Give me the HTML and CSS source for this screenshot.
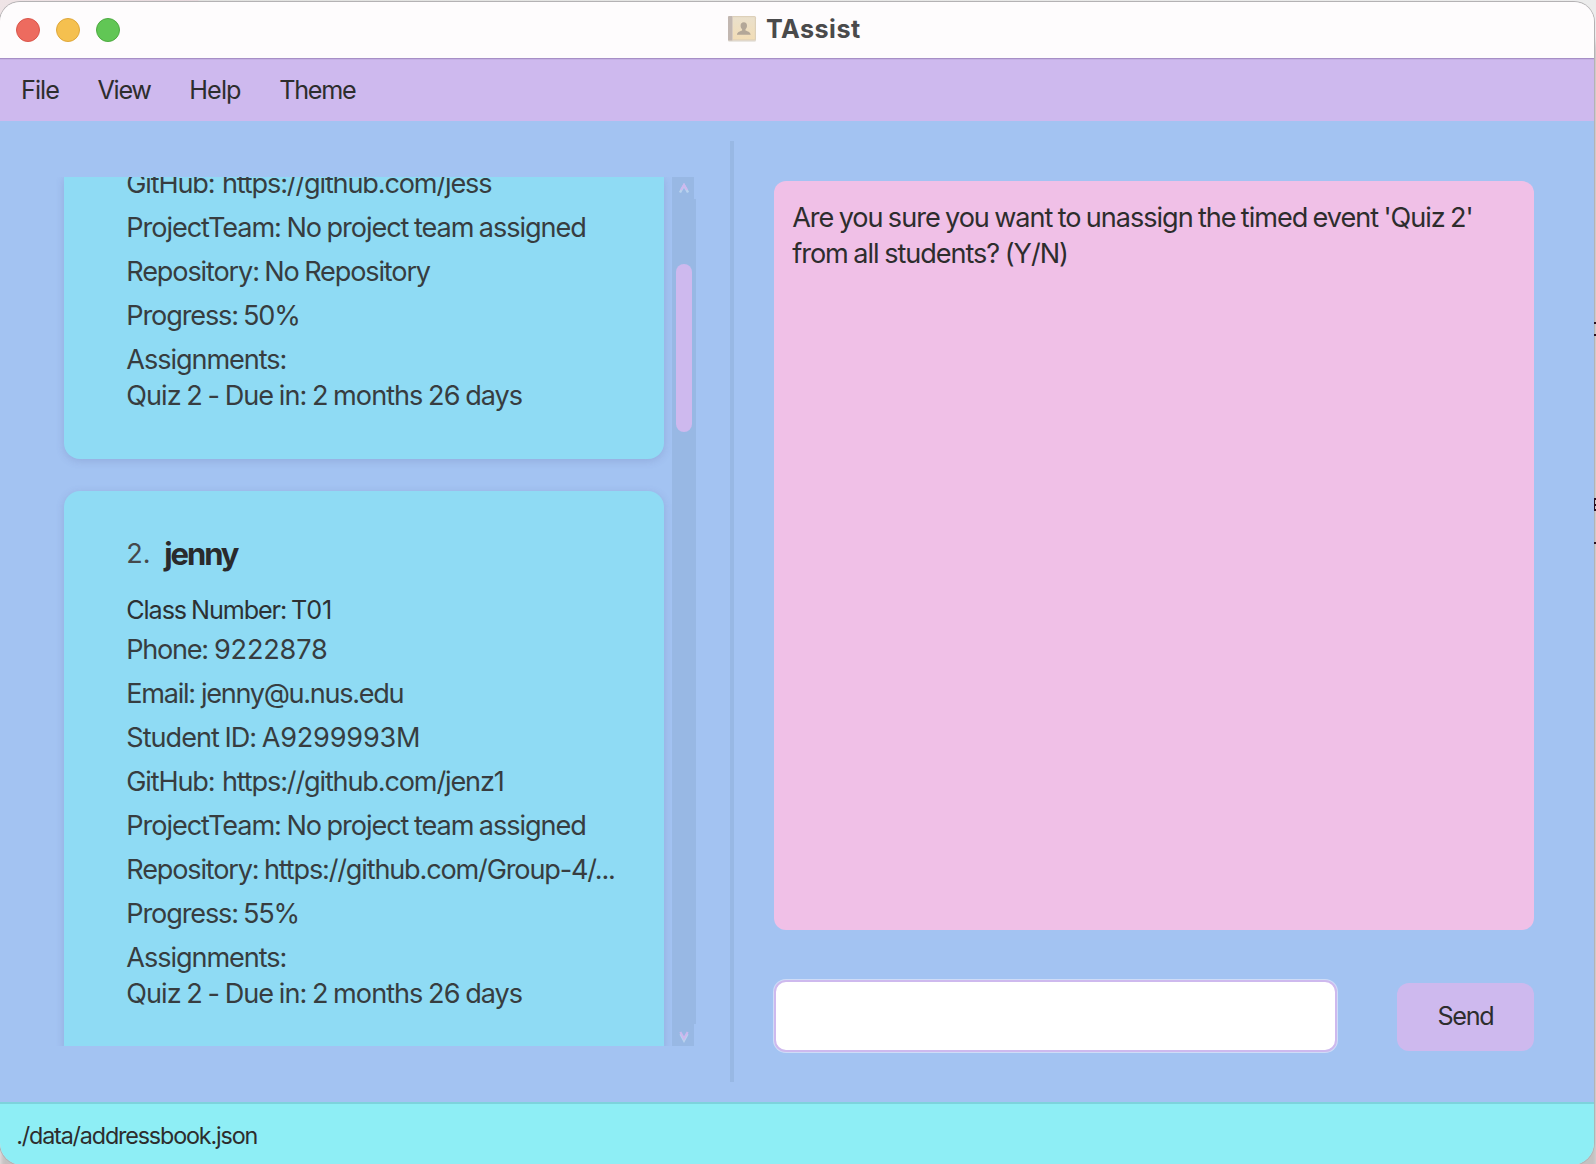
FILE: index.html
```
<!DOCTYPE html>
<html lang="en">
<head>
<meta charset="utf-8">
<title>TAssist</title>
<link rel="stylesheet" href="styles.css">
</head>
<body>
<div class="window">
  <header class="titlebar">
    <div class="lights">
      <span class="light light-close"></span>
      <span class="light light-min"></span>
      <span class="light light-max"></span>
    </div>
    <div class="title">
      <svg class="book" width="30" height="28" viewBox="0 0 30 28">
        <defs>
          <linearGradient id="cover" x1="0" y1="0" x2="0" y2="1">
            <stop offset="0" stop-color="#eae0cc"/>
            <stop offset="1" stop-color="#f2ddb6"/>
          </linearGradient>
        </defs>
        <rect x="1" y="1.8" width="28" height="25" rx="1.5" fill="#e4dfd9"/>
        <rect x="1" y="1" width="28" height="24.6" rx="1.5" fill="#ddd0b9"/>
        <rect x="6" y="2.200" width="21.800" height="22.200" fill="url(#cover)"/>
        <path d="M2.200 1H5v24.600H2.200A1.200 1.200 0 0 1 1 24.400V2.200A1.200 1.200 0 0 1 2.200 1z" fill="#c2b7b1"/>
        <path d="M5 1h1v24.600H5z" fill="#d8ccc0"/>
        <path d="M16.800 7.300c2.200 0 3.200 1.500 3.200 3.500 0 1.400-.6 2.700-1.500 3.400v1.400c1.700.8 4.800 1.300 5.200 4.200H9.900c.4-2.900 3.500-3.400 5.200-4.200v-1.400c-.9-.7-1.500-2-1.500-3.400 0-2 1-3.500 3.200-3.500z" fill="#b3a798"/>
      </svg>
      <span class="title-text">TAssist</span>
    </div>
  </header>

  <nav class="menubar">
    <span class="menu menu-file">File</span>
    <span class="menu menu-view">View</span>
    <span class="menu menu-help">Help</span>
    <span class="menu menu-theme">Theme</span>
  </nav>

  <main class="content">
    <section class="people">
      <div class="list">
        <article class="card card-first">
          <p class="line line-cut url">GitHub: https://github.com/jess</p>
          <p class="line">ProjectTeam: No project team assigned</p>
          <p class="line norepo">Repository: No Repository</p>
          <p class="line percent">Progress: 50%</p>
          <div class="assignments">
            <p class="line">Assignments:</p>
            <p class="line quiz">Quiz 2 - Due in: 2 months 26 days</p>
          </div>
        </article>
        <article class="card card-second">
          <div class="heading"><span class="index">2.</span><span class="name">jenny</span></div>
          <p class="line class-number">Class Number: <span class="digits">T01</span></p>
          <p class="line tight">Phone: <span class="digits">9222878</span></p>
          <p class="line tight">Email: jenny@u.nus.edu</p>
          <p class="line student">Student ID: <span class="digits">A9299993M</span></p>
          <p class="line url">GitHub: https://github.com/jenz1</p>
          <p class="line">ProjectTeam: No project team assigned</p>
          <p class="line repo">Repository: https://github.com/Group-4/...</p>
          <p class="line percent">Progress: 55%</p>
          <div class="assignments">
            <p class="line">Assignments:</p>
            <p class="line quiz">Quiz 2 - Due in: 2 months 26 days</p>
          </div>
        </article>
      </div>
      <div class="scrollbar">
        <div class="arrow"><svg width="12" height="12" viewBox="0 0 12 12"><path d="M3 10.500L7 3.500L11 10.500" fill="none" stroke="#b9d3ee" stroke-width="2.400"/><path d="M4 8L7 3L10 8" fill="none" stroke="#cdb9ee" stroke-width="2.200"/></svg></div>
        <div class="track"><div class="thumb"></div></div>
        <div class="arrow arrow-down"><svg width="12" height="12" viewBox="0 0 12 12"><path d="M3.500 3L7 9.500L10.500 3" fill="none" stroke="#b9d3ee" stroke-width="2.400"/><path d="M3.300 1L7 7.500L10.700 1" fill="none" stroke="#cdb9ee" stroke-width="2.200"/></svg></div>
      </div>
    </section>

    <div class="divider"></div>

    <section class="chat">
      <div class="message">
        <p class="msg msg-one">Are you sure you want to unassign the timed event 'Quiz 2'</p>
        <p class="msg">from all students? (Y/N)</p>
      </div>
      <div class="command">
        <div class="field"></div>
        <div class="send">Send</div>
      </div>
    </section>
  </main>

  <footer class="status">./data/addressbook.json</footer>
</div>
<svg class="desktop-edge" width="2" height="230" viewBox="0 0 2 230"><path d="M0 1h2v2H0zM0 13h2v2H0zM0 177h1v13H0zM1 177h1v2H1zM1 183h1v2H1zM1 188h1v2H1zM0 221h2v2H0z" fill="#2a1020"/></svg>
</body>
</html>
```
FILE: styles.css
```
* { box-sizing: border-box; }

body {
  position: relative;
  margin: 0;
  width: 1596px;
  height: 1164px;
  overflow: hidden;
  background: linear-gradient(90deg, #efe4e6 0, #e6d8dc 198px, #e2e2e0 199px, #ececec 100%);
  font-family: Inter, "Liberation Sans", sans-serif;
  color: #2d2d2d;
}

p { margin: 0; }

.window {
  display: flex;
  flex-direction: column;
  width: 1594px;
  height: 1163px;
  margin-top: 2px;
  border-radius: 20px 20px 22px 22px;
  overflow: hidden;
  box-shadow: 0 0 0 1px #b4b2b4, 2px 30px 4px 1px #c4c1c1;
}

/* Sliver of the desktop behind the window's right side */
.desktop-edge { position: absolute; right: 0; top: 321px; }

.titlebar {
  position: relative;
  display: flex;
  align-items: center;
  justify-content: center;
  flex: none;
  height: 56px;
  background: #fefcfd;
}

.lights {
  position: absolute;
  left: 16px;
  top: 16px;
  display: flex;
  gap: 16px;
}

.light { width: 24px; height: 24px; border-radius: 50%; border: 1px solid; }
.light-close { background: #ed6b5f; border-color: #d9564b; }
.light-min { background: #f5c04f; border-color: #dea73b; }
.light-max { background: #61c655; border-color: #4eaa41; }

.title {
  display: flex;
  align-items: center;
  width: 140px;
  height: 56px;
  padding-bottom: 3px;
}

.book { flex: none; margin: 1px 9px 0 0; }

.title-text {
  font-size: 25.2px;
  font-weight: 700;
  line-height: 36px;
  letter-spacing: 0.45px;
  color: #4a4a4b;
}

.menubar {
  display: flex;
  flex: none;
  height: 63px;
  padding: 13px 0 0 21px;
  border-top: 1px solid #a78fc6;
  background: #ceb9ee;
  box-shadow: inset 0 1px 0 #c5b0e4;
}

.menu { font-size: 25.2px; line-height: 36px; white-space: nowrap; }
.menu-file { width: 76.500px; letter-spacing: -0.96px; }
.menu-view { width: 91.800px; letter-spacing: -1.3px; }
.menu-help { width: 90px; letter-spacing: -0.9px; }
.menu-theme { letter-spacing: -1.3px; }

.content {
  display: flex;
  flex: none;
  height: 981px;
  padding: 20px 60px 20px 56px;
  background: #a3c3f2;
}

.people { display: flex; width: 674px; height: 869px; margin-top: 36px; }

.list {
  width: 616px;
  height: 869px;
  padding: 0 8px;
  overflow: hidden;
}

.card {
  width: 600px;
  background: #8fdbf4;
  box-shadow: 0 2px 8px rgba(80, 80, 140, 0.2);
}

.card-first {
  height: 282px;
  margin-bottom: 32px;
  padding: 1px 0 0 62.300px;
  border-radius: 0 0 16px 16px;
}

.card-second {
  height: 570px;
  padding: 41px 0 0 62.300px;
  border-radius: 16px;
}

.line {
  height: 36px;
  margin-bottom: 8px;
  font-size: 27.1px;
  line-height: 36px;
  letter-spacing: -1.06px;
  word-spacing: -1px;
  white-space: nowrap;
  color: #373d40;
}

.line-cut { margin-top: -12px; }
.tight { letter-spacing: -1.3px; word-spacing: 0; }
.norepo { letter-spacing: -1.14px; }
.student { letter-spacing: -1px; }
.digits { letter-spacing: -0.2px; }
.url { letter-spacing: -1.15px; word-spacing: 1px; }
.repo { letter-spacing: -1.17px; }
.percent { letter-spacing: -1.14px; word-spacing: -1.5px; }
.quiz { letter-spacing: -0.97px; }
.assignments .line { margin-bottom: 0; }

.heading { display: flex; height: 44px; margin-bottom: 16px; line-height: 44px; }
.index { width: 38px; font-size: 27.1px; color: #45494c; }
.name { font-size: 31px; font-weight: 700; letter-spacing: -2.1px; color: #2a2a2c; }
.class-number { margin-bottom: 4px; font-size: 25.2px; letter-spacing: -1.1px; color: #2d3133; }

.scrollbar { width: 24px; height: 869px; }
.arrow { width: 22px; height: 22px; padding: 5px; background: #98b8e4; }
.arrow svg { display: block; }
.arrow-down { padding-top: 7px; }
.track { width: 24px; height: 825px; padding: 65px 4px 0; background: #98b8e4; }
.thumb { width: 16px; height: 168px; border-radius: 8px; background: #ceb9ee; }

.divider { width: 4px; height: 941px; background: #98b8e4; }

.chat { width: 800px; padding: 40px 0 0 40px; }

.message {
  width: 760px;
  height: 749px;
  padding: 19px 0 0 18.200px;
  border-radius: 12px;
  background: #f0c0e7;
}

.msg {
  font-size: 27.1px;
  line-height: 36px;
  letter-spacing: -1.04px;
  word-spacing: -1px;
  white-space: nowrap;
  color: #2d2d2d;
}

.msg-one { letter-spacing: -1.02px; word-spacing: -1.3px; }

.command { display: flex; justify-content: space-between; margin-top: 50px; }

.field {
  width: 563px;
  height: 72px;
  border: 2px solid #ceb9ee;
  border-radius: 12px;
  background: #fff;
  box-shadow: 0 0 0 1px #cfdcf7;
}

.send {
  width: 137px;
  height: 68px;
  margin-top: 3px;
  padding-left: 40.5px;
  border-radius: 12px;
  background: #ceb9ee;
  font-size: 25.2px;
  line-height: 67px;
  letter-spacing: -1.3px;
}

.status {
  flex: none;
  height: 63px;
  padding: 14px 0 0 16.2px;
  border-top: 2px solid #7dd3dc;
  background: #8eeef5;
  font-size: 23.3px;
  line-height: 36px;
  letter-spacing: -1.143px;
}
```
